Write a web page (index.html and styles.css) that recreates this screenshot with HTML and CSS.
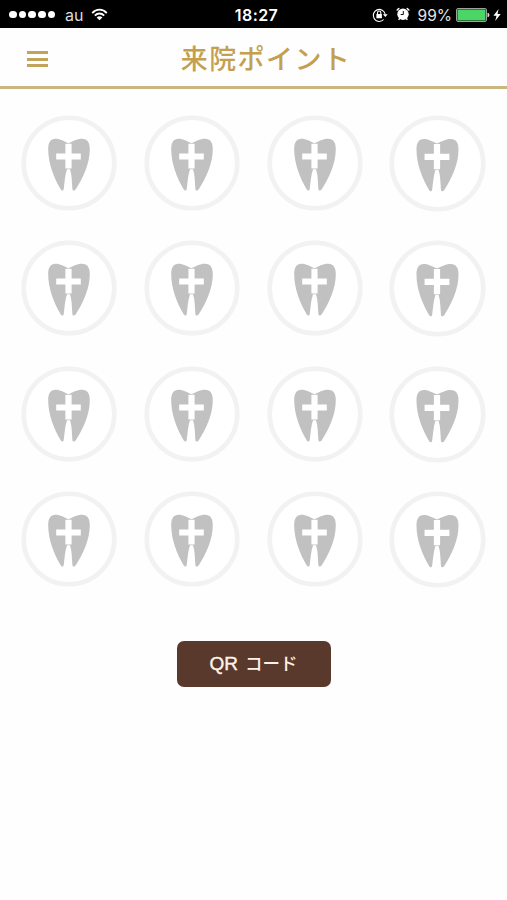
FILE: index.html
```html
<!DOCTYPE html>
<html lang="ja">
<head>
<meta charset="utf-8">
<title>来院ポイント</title>
<link rel="stylesheet" href="styles.css">
</head>
<body>
<svg class="defs" aria-hidden="true">
  <symbol id="tooth" viewBox="0 0 96 96">
    <circle cx="48" cy="48" r="45.3" fill="#fff" stroke="#f2f2f2" stroke-width="4.6"/>
    <path fill="#c1c1c1" d="M47.500 28.200C43 26.500 39.500 23.700 34.500 23.700C29.500 23.700 27.200 27.500 27.200 34C27.200 49 33 63 39.800 74.500C40.800 76.200 42.400 75.800 42.700 74C43.700 67 44 60 46 54.300H49C51 60 50.800 67 51.400 74C51.600 75.800 53.400 76.200 54.600 74.500C62 63 68.800 49 68.800 34C68.800 27.500 66.500 23.700 61 23.700C55.500 23.700 52 26.500 47.500 28.200Z"/>
    <path fill="#fff" d="M44.400 28.800H50.600V38.400H59.800V44.500H50.600V53.600H44.400V44.500H35.200V38.400H44.400Z"/>
  </symbol>
</svg>
<div class="status">
  <div class="side">
    <div class="signal"><i></i><i></i><i></i><i></i><i></i></div>
    <span class="carrier">au</span>
    <svg class="wifi" viewBox="0 0 18 14" fill="none" stroke="#fff" stroke-width="2"><path d="M1.200 5.400C5.500 .6 12.500 .6 16.800 5.400M4 8.200C6.800 5.200 11.200 5.200 14 8.200"/><path fill="#fff" stroke="none" d="M5.900 10.100C7.600 8.400 10.400 8.400 12.100 10.100L9 13.300Z"/></svg>
  </div>
  <time class="clock">18:27</time>
  <div class="side end">
    <svg class="lock" viewBox="0 0 16 16" fill="none" stroke="#fff"><path stroke-width="1.100" d="M11.700 12.500A6 6 0 1 1 13.200 7.500"/><path fill="#fff" stroke="none" d="M10.900 7.300H15.700L13.300 10ZM4.400 7H9.900V11.300H4.400Z"/><path stroke-width="1.100" d="M5.500 7.200V5.700C5.500 3.500 8.800 3.500 8.800 5.700V7.200"/></svg>
    <svg class="alarm" viewBox="0 0 14 14" fill="none" stroke="#fff"><circle cx="7" cy="7.300" r="5.700" fill="#fff" stroke="none"/><path stroke-width="1.500" stroke-linecap="round" d="M1.200 3L2.800 1.500M11.200 1.500L12.800 3M3.500 11.500L3 12.400M10.500 11.500L11 12.400"/><path stroke="#111" d="M7.300 4V7.500H4.700"/></svg>
    <span class="percent">99%</span>
    <svg class="battery" viewBox="0 0 34 14"><rect x=".5" y=".5" width="30" height="13" rx="1.500" fill="#111" stroke="#9da29e"/><rect x="1.500" y="1.500" width="28" height="11" rx=".5" fill="#4bd565"/><path fill="#ddd" d="M31.500 4.700C34 5 34 9 31.500 9.300Z"/></svg>
    <svg class="bolt" viewBox="0 0 8 12"><path fill="#fff" d="M5.600 0L.4 6.700H3.500L2.200 12L7.700 4.900H4.500Z"/></svg>
  </div>
</div>
<header class="header">
  <div class="menu"><i></i><i></i><i></i></div>
  <h1 class="title">来院ポイント</h1>
</header>
<main>
  <div class="points">
    <svg><use href="#tooth"/></svg><svg><use href="#tooth"/></svg><svg><use href="#tooth"/></svg><svg class="wide"><use href="#tooth"/></svg>
    <svg><use href="#tooth"/></svg><svg><use href="#tooth"/></svg><svg><use href="#tooth"/></svg><svg class="wide"><use href="#tooth"/></svg>
    <svg><use href="#tooth"/></svg><svg><use href="#tooth"/></svg><svg><use href="#tooth"/></svg><svg class="wide"><use href="#tooth"/></svg>
    <svg><use href="#tooth"/></svg><svg><use href="#tooth"/></svg><svg><use href="#tooth"/></svg><svg class="wide"><use href="#tooth"/></svg>
  </div>
  <button class="qr"><span class="latin">QR</span> コード</button>
</main>
</body>
</html>
```
FILE: styles.css
```css
* { box-sizing: border-box; }
body {
  margin: 0;
  min-height: 900px;
  background: #fefefe;
  font-family: Inter, "Noto Sans CJK JP", sans-serif;
}
svg { display: block; flex: none; }
.defs { display: none; }

.status {
  display: grid;
  grid-template-columns: 1fr auto 1fr;
  align-items: center;
  height: 28px;
  padding: 1px 6px 0 9px;
  background: #000;
  color: #fff;
  font-size: 16px;
}
.side { display: flex; align-items: center; }
.end { justify-content: flex-end; }
.signal { display: flex; gap: 2px; }
.signal i { width: 7.700px; height: 7.700px; border-radius: 50%; background: #fff; }
.carrier { margin-left: 9.500px; color: #ddd; }
.wifi { width: 17px; height: 13px; margin-left: 8px; margin-top: -1px; }
.clock { font-weight: 600; font-size: 16px; letter-spacing: .4px; padding-left: 3px; }
.lock { width: 16px; height: 16px; }
.alarm { width: 14px; height: 14px; margin-left: 7.500px; margin-top: -1px; }
.percent { margin-left: 8px; padding-top: 1px; color: #e4e4e4; font-size: 15.500px; }
.battery { width: 34px; height: 14px; margin-left: 4px; }
.bolt { width: 8px; height: 12px; margin-left: 3px; }

.header {
  display: grid;
  grid-template-columns: 48px 1fr 23px;
  align-items: center;
  height: 61px;
  padding-top: 2px;
  border-bottom: 3px solid #c9b77f;
}
.menu { display: grid; gap: 3.500px; width: 21px; margin-left: 27px; margin-top: 2px; }
.menu i { height: 3px; background: #c1a35b; }
.title {
  margin: 4px 0 0;
  text-align: center;
  color: #c4a04e;
  font-size: 27px;
  font-weight: 500;
  line-height: 40px;
  letter-spacing: 1.400px;
}

.points {
  display: grid;
  grid-template-columns: repeat(3, 96px) 97px;
  grid-auto-rows: 96px;
  gap: 29.500px 26.800px;
  padding: 25.900px 0 0 21px;
}
.points svg { width: 96px; height: 96px; }
.points .wide { width: 97px; height: 97px; }

.qr {
  display: block;
  width: 154px;
  height: 46px;
  margin: 53.600px auto 0;
  padding: 0 0 2px;
  border: 0;
  border-radius: 7px;
  background: #59392c;
  color: #fff1e8;
  font: 500 17.500px "Noto Sans CJK JP", sans-serif;
}
.latin {
  margin-right: 3px;
  font-family: "Liberation Sans", sans-serif;
  font-size: 19px;
  -webkit-text-stroke: .4px #fff1e8;
}
```
